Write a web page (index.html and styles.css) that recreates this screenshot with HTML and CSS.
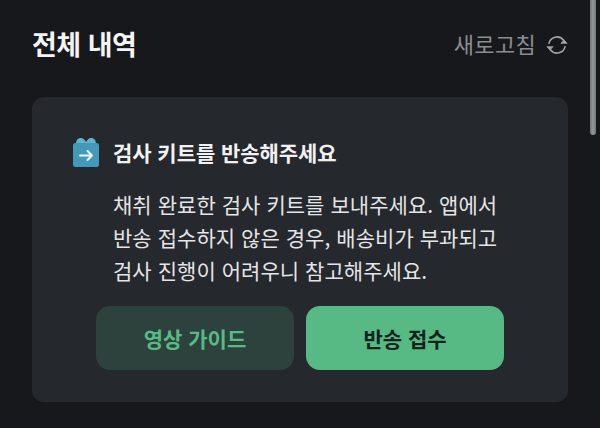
FILE: index.html
```html
<!DOCTYPE html>
<html lang="ko">
<head>
<meta charset="utf-8">
<title>전체 내역</title>
<link rel="stylesheet" href="styles.css">
</head>
<body>
<div class="page">
  <header class="top">
    <h1 class="title">전체 내역</h1>
    <div class="refresh">
      <span>새로고침</span>
      <svg class="refresh-icon" viewBox="0 0 24 24" fill="none" stroke="#a3a5a9" stroke-width="1.7" stroke-linecap="round" stroke-linejoin="round">
        <path d="M3.2 10.2A9 9 0 0 1 19 6.6"/>
        <path d="M20.8 13.8A9 9 0 0 1 5 17.4"/>
        <path d="M16.6 10.2h6.4l-3.2-3.6z" fill="#a3a5a9" stroke-width="0.8"/>
        <path d="M7.4 13.8H1l3.2 3.6z" fill="#a3a5a9" stroke-width="0.8"/>
      </svg>
    </div>
  </header>
  <section class="card">
    <div class="card-head">
      <svg class="kit" viewBox="0 0 28 30">
        <path d="M4 7C4 3 6 1 9 1c2 0 4 2 5 4 1-2 3-4 5-4 3 0 5 2 5 6z" fill="#62b3cd"/>
        <rect x="1" y="6" width="26" height="24" rx="2.5" fill="#429ab8"/>
        <path d="M8 18.5h12M15.5 14l4.5 4.5-4.5 4.5" fill="none" stroke="#f2f8fa" stroke-width="2" stroke-linecap="round" stroke-linejoin="round"/>
      </svg>
      <h2 class="card-title">검사 키트를 반송해주세요</h2>
    </div>
    <p class="desc">채취 완료한 검사 키트를 보내주세요. 앱에서<br>반송 접수하지 않은 경우, 배송비가 부과되고<br>검사 진행이 어려우니 참고해주세요.</p>
    <div class="actions">
      <button class="btn btn-ghost">영상 가이드</button>
      <button class="btn btn-solid">반송 접수</button>
    </div>
  </section>
</div>
<div class="scrollbar"></div>
</body>
</html>
```
FILE: styles.css
```css
* { box-sizing: border-box; }
html, body { margin: 0; height: 100%; }
body {
  background: #17181c;
  font-family: "Noto Sans CJK KR", "Noto Sans", sans-serif;
  overflow: hidden;
  position: relative;
}
.page { width: 600px; padding: 19px 32px 0; }
.top {
  display: flex;
  justify-content: space-between;
  align-items: center;
  height: 48px;
  margin-bottom: 30px;
}
.title { margin: 0; font-size: 27px; font-weight: 700; color: #f4f4f5; letter-spacing: -0.5px; }
.refresh { display: flex; align-items: center; gap: 10px; color: #8b8d91; font-size: 22px; letter-spacing: 0.3px; }
.refresh-icon { width: 22px; height: 22px; margin-top: 3px; }
.card {
  width: 536px;
  height: 305px;
  background: #25282d;
  border-radius: 12px;
  padding: 40px 0 0 40px;
}
.card-head { display: flex; align-items: center; gap: 13px; height: 30px; }
.kit { width: 28px; height: 30px; flex: none; }
.card-title { margin: 0; font-size: 21px; font-weight: 700; color: #f1f1f2; letter-spacing: -0.05px; }
.desc {
  margin: 21px 0 0 41px;
  font-size: 21px;
  line-height: 33px;
  color: #e4e5e7;
  white-space: nowrap;
  letter-spacing: 0.05px;
}
.actions { display: flex; gap: 12px; margin: 19px 0 0 24px; }
.btn {
  width: 198px;
  height: 64px;
  border: 0;
  border-radius: 14px;
  font-family: inherit;
  font-size: 21px;
  font-weight: 700;
}
.btn-ghost { background: #2d423c; color: #58ba85; }
.btn-solid { background: #57ba85; color: #10231a; }
.scrollbar {
  position: absolute;
  top: 0;
  right: 4px;
  width: 6px;
  height: 135px;
  background: linear-gradient(90deg, #737477, #96979a 50%, #737477);
  border-radius: 0 0 3px 3px;
}
```
